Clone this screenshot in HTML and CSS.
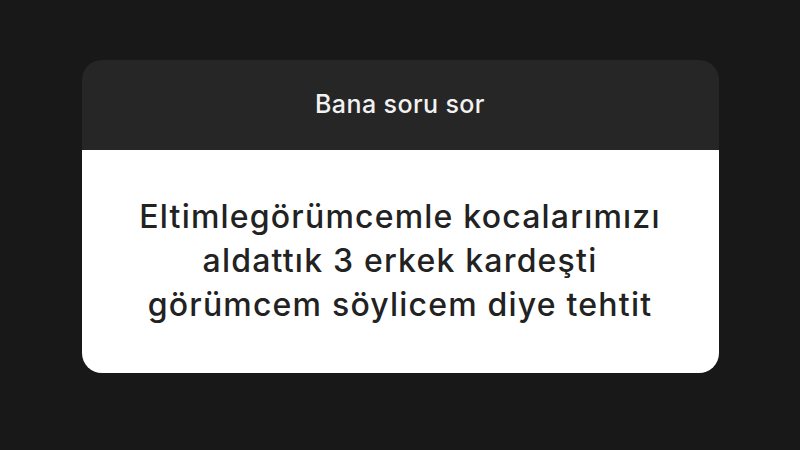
FILE: index.html
```html
<!DOCTYPE html>
<html lang="tr">
<head>
    <meta charset="UTF-8">
    <meta name="viewport" content="width=device-width, initial-scale=1.0">
    <title>Bana soru sor</title>
    <link rel="stylesheet" href="styles.css">
</head>
<body>
    <div class="question-card">
        <div class="card-header">Bana soru sor</div>
        <div class="card-body">
            <p>Eltimlegörümcemle kocalarımızı<br>aldattık 3 erkek kardeşti<br>görümcem söylicem diye tehtit</p>
        </div>
    </div>
</body>
</html>
```

FILE: styles.css
```css
html, body {
    margin: 0;
    height: 100%;
}
body {
    background-color: #181818;
    font-family: Inter, Roboto, "Noto Sans", Arial, sans-serif;
    padding-top: 60px;
    box-sizing: border-box;
}
.question-card {
    width: 637px;
    margin: 0 auto;
    border-radius: 20px;
    overflow: hidden;
}
.card-header {
    background-color: #262626;
    color: #f2f2f2;
    height: 90px;
    display: flex;
    align-items: center;
    justify-content: center;
    font-size: 25px;
    font-weight: 500;
    letter-spacing: 0.4px;
    padding-bottom: 2px;
    box-sizing: border-box;
}
.card-body {
    background-color: #ffffff;
    height: 223px;
    display: flex;
    align-items: center;
    justify-content: center;
}
.card-body p {
    margin: 0;
    color: #222222;
    font-size: 32px;
    font-weight: 500;
    letter-spacing: 1.2px;
    line-height: 44px;
    text-align: center;
    padding-bottom: 2px;
}
```
